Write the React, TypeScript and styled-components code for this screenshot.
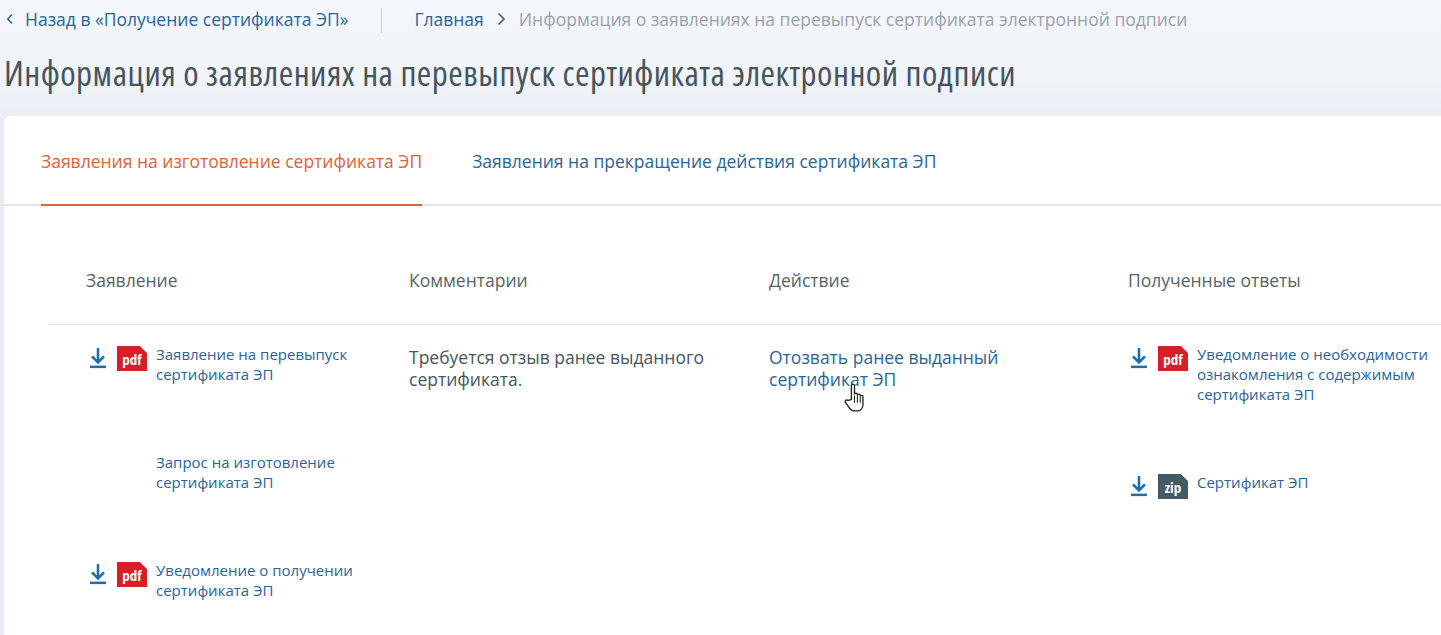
import React from 'react'
import styled, { createGlobalStyle } from 'styled-components'

const GlobalStyle = createGlobalStyle`
  html, body {
    margin: 0;
    padding: 0;
    height: 635px;
    overflow: hidden;
    background: #fff;
  }
  body {
    font-family: "Open Sans", "Liberation Sans", sans-serif;
  }
`

const Page = styled.div`
  width: 1441px;
  height: 635px;
  overflow: hidden;
  background: linear-gradient(180deg, #f3f6fb 0%, #f1f4f9 70px, #e9edf3 125px);
  display: flex;
  flex-direction: column;
`

const Breadcrumbs = styled.nav`
  display: flex;
  align-items: center;
  height: 38px;
  padding-left: 6px;
  font-size: 17.5px;
  line-height: 24px;
  white-space: nowrap;
`

const BackLink = styled.a`
  display: flex;
  align-items: center;
  gap: 11px;
  color: #2a6496;
`

const Divider = styled.span`
  width: 1px;
  height: 25px;
  margin: 2px 32px 0 33px;
  background: #cdd3d9;
`

const CrumbLink = styled.a`
  color: #2a6496;
`

const Chevron = styled.svg`
  flex: none;
  display: block;
`

const CrumbSep = styled.span`
  display: flex;
  margin: 0 13px 0 12px;
`

const CrumbCurrent = styled.span`
  color: #9aa3aa;
`

const Title = styled.h1`
  margin: 0;
  height: 78px;
  padding: 15px 0 0 4px;
  box-sizing: border-box;
  font-size: 35px;
  line-height: 40px;
  letter-spacing: 0.5px;
  font-weight: 500;
  font-stretch: 75%;
  color: #47555c;
  white-space: nowrap;
`

const Card = styled.main`
  flex: 1;
  margin-left: 4px;
  background: #fff;
  border-radius: 6px 0 0 0;
  display: flex;
  flex-direction: column;
`

const Tabs = styled.div`
  display: flex;
  gap: 50px;
  height: 90px;
  box-sizing: border-box;
  padding-left: 37px;
  border-bottom: 2px solid #e1e4e6;
`

const Tab = styled.a<{ $active?: boolean }>`
  display: block;
  height: 90px;
  box-sizing: border-box;
  padding-top: 33px;
  font-size: 17.5px;
  line-height: 24px;
  white-space: nowrap;
  color: ${(p) => (p.$active ? '#df6238' : '#2a6496')};
  border-bottom: ${(p) => (p.$active ? '2px solid #df6238' : 'none')};
`

const Table = styled.div`
  margin-left: 44px;
  position: relative;
`

const HeadRow = styled.div`
  display: grid;
  grid-template-columns: 361px 360px 359px 1fr;
  height: 119px;
  box-sizing: border-box;
  padding: 62px 0 0;
  border-bottom: 1px solid #e3e6e8;
`

const HeadCell = styled.div<{ $first?: boolean }>`
  font-size: 17.5px;
  line-height: 24px;
  color: #566369;
  padding-left: ${(p) => (p.$first ? '38px' : '0')};
`

const BodyRow = styled.div`
  display: grid;
  grid-template-columns: 361px 360px 359px 1fr;
  padding-top: 21px;
`

const FileColumn = styled.div<{ $first?: boolean }>`
  display: flex;
  flex-direction: column;
  gap: 70px;
  padding-left: ${(p) => (p.$first ? '41px' : '2px')};
`

const FileItem = styled.div`
  display: flex;
  align-items: flex-start;
`

const DownloadSlot = styled.span`
  flex: none;
  width: 28px;
  height: 25px;
  padding-top: 1px;
  box-sizing: border-box;
`

const Badge = styled.span<{ $kind: 'pdf' | 'zip' }>`
  flex: none;
  width: 30px;
  height: 25px;
  margin-right: 9px;
  display: flex;
  align-items: center;
  justify-content: center;
  font-size: 15px;
  font-weight: 700;
  font-stretch: 75%;
  color: #fff;
  background: ${(p) => (p.$kind === 'pdf' ? '#d81e26' : '#465a65')};
  clip-path: polygon(0 0, 76% 0, 100% 28%, 100% 100%, 0 100%);
`

const BadgeSpacer = styled.span`
  flex: none;
  width: 67px;
`

const FileLink = styled.a`
  max-width: 236px;
  margin-top: -2px;
  font-size: 15px;
  line-height: 20px;
  color: #2a6496;
`

const CommentText = styled.div`
  max-width: 310px;
  font-size: 17.5px;
  line-height: 22px;
  color: #47555c;
`

const ActionLink = styled.a`
  display: block;
  max-width: 300px;
  font-size: 17.5px;
  line-height: 22px;
  color: #2a6496;
`

const Pointer = styled.svg`
  position: absolute;
  left: 795px;
  top: 176px;
`

const ChevronLeft = () => (
  <Chevron width="8" height="12" viewBox="0 0 8 12">
    <path d="M6 1.5 1.8 6 6 10.5" fill="none" stroke="#2a6496" strokeWidth="1.5" />
  </Chevron>
)

const ChevronRight = () => (
  <Chevron width="10" height="14" viewBox="0 0 10 14">
    <path d="M2.500 1.500 8 7l-5.500 5.500" fill="none" stroke="#4f5d65" strokeWidth="1.700" />
  </Chevron>
)

const DownloadIcon = () => (
  <svg width="18" height="22" viewBox="0 0 18 22" style={{ display: 'block' }}>
    <path d="M9 1v14M3 9.400 9 15.400l6-6" fill="none" stroke="#1a6fae" strokeWidth="2.5" />
    <rect x="1" y="18.600" width="16" height="2.500" fill="#1a6fae" />
  </svg>
)

interface IFile {
  name: string
  kind?: 'pdf' | 'zip'
}

const requests: IFile[] = [
  { name: 'Заявление на перевыпуск сертификата ЭП', kind: 'pdf' },
  { name: 'Запрос на изготовление сертификата ЭП' },
  { name: 'Уведомление о получении сертификата ЭП', kind: 'pdf' },
]

const answers: IFile[] = [
  { name: 'Уведомление о необходимости ознакомления с содержимым сертификата ЭП', kind: 'pdf' },
  { name: 'Сертификат ЭП', kind: 'zip' },
]

const File = ({ file }: { file: IFile }) => (
  <FileItem>
    {file.kind ? (
      <>
        <DownloadSlot>
          <DownloadIcon />
        </DownloadSlot>
        <Badge $kind={file.kind}>{file.kind}</Badge>
      </>
    ) : (
      <BadgeSpacer />
    )}
    <FileLink>{file.name}</FileLink>
  </FileItem>
)

export default function App() {
  return (
    <Page>
      <GlobalStyle />
      <Breadcrumbs>
        <BackLink>
          <ChevronLeft />
          Назад в «Получение сертификата ЭП»
        </BackLink>
        <Divider />
        <CrumbLink>Главная</CrumbLink>
        <CrumbSep>
          <ChevronRight />
        </CrumbSep>
        <CrumbCurrent>Информация о заявлениях на перевыпуск сертификата электронной подписи</CrumbCurrent>
      </Breadcrumbs>
      <Title>Информация о заявлениях на перевыпуск сертификата электронной подписи</Title>
      <Card>
        <Tabs>
          <Tab $active>Заявления на изготовление сертификата ЭП</Tab>
          <Tab>Заявления на прекращение действия сертификата ЭП</Tab>
        </Tabs>
        <Table>
          <HeadRow>
            <HeadCell $first>Заявление</HeadCell>
            <HeadCell>Комментарии</HeadCell>
            <HeadCell>Действие</HeadCell>
            <HeadCell>Полученные ответы</HeadCell>
          </HeadRow>
          <BodyRow>
            <FileColumn $first>
              {requests.map((f) => (
                <File key={f.name} file={f} />
              ))}
            </FileColumn>
            <CommentText>Требуется отзыв ранее выданного сертификата.</CommentText>
            <ActionLink>Отозвать ранее выданный сертификат ЭП</ActionLink>
            <FileColumn>
              {answers.map((f) => (
                <File key={f.name} file={f} />
              ))}
            </FileColumn>
          </BodyRow>
          <Pointer width="24" height="31" viewBox="0 0 22 30">
            <path
              d="M7.5 17V3.600c0-2 3-2 3 0V12c0-1.600 2.800-1.600 2.800 0v1c0-1.600 2.800-1.600 2.800 0v1c0-1.500 2.600-1.500 2.600 0v7.500c0 3.600-2.200 6.500-5.600 6.500h-2.300c-3 0-4.200-1.300-5.300-3L1.600 19.600c-.9-1.700 1.300-3 2.500-1.700z"
              fill="#fff"
              stroke="#222"
              strokeWidth="1.3"
            />
            <path d="M10.500 13v7M13.300 13v7M16.100 14v6" stroke="#222" strokeWidth="1" fill="none" />
          </Pointer>
        </Table>
      </Card>
    </Page>
  )
}
